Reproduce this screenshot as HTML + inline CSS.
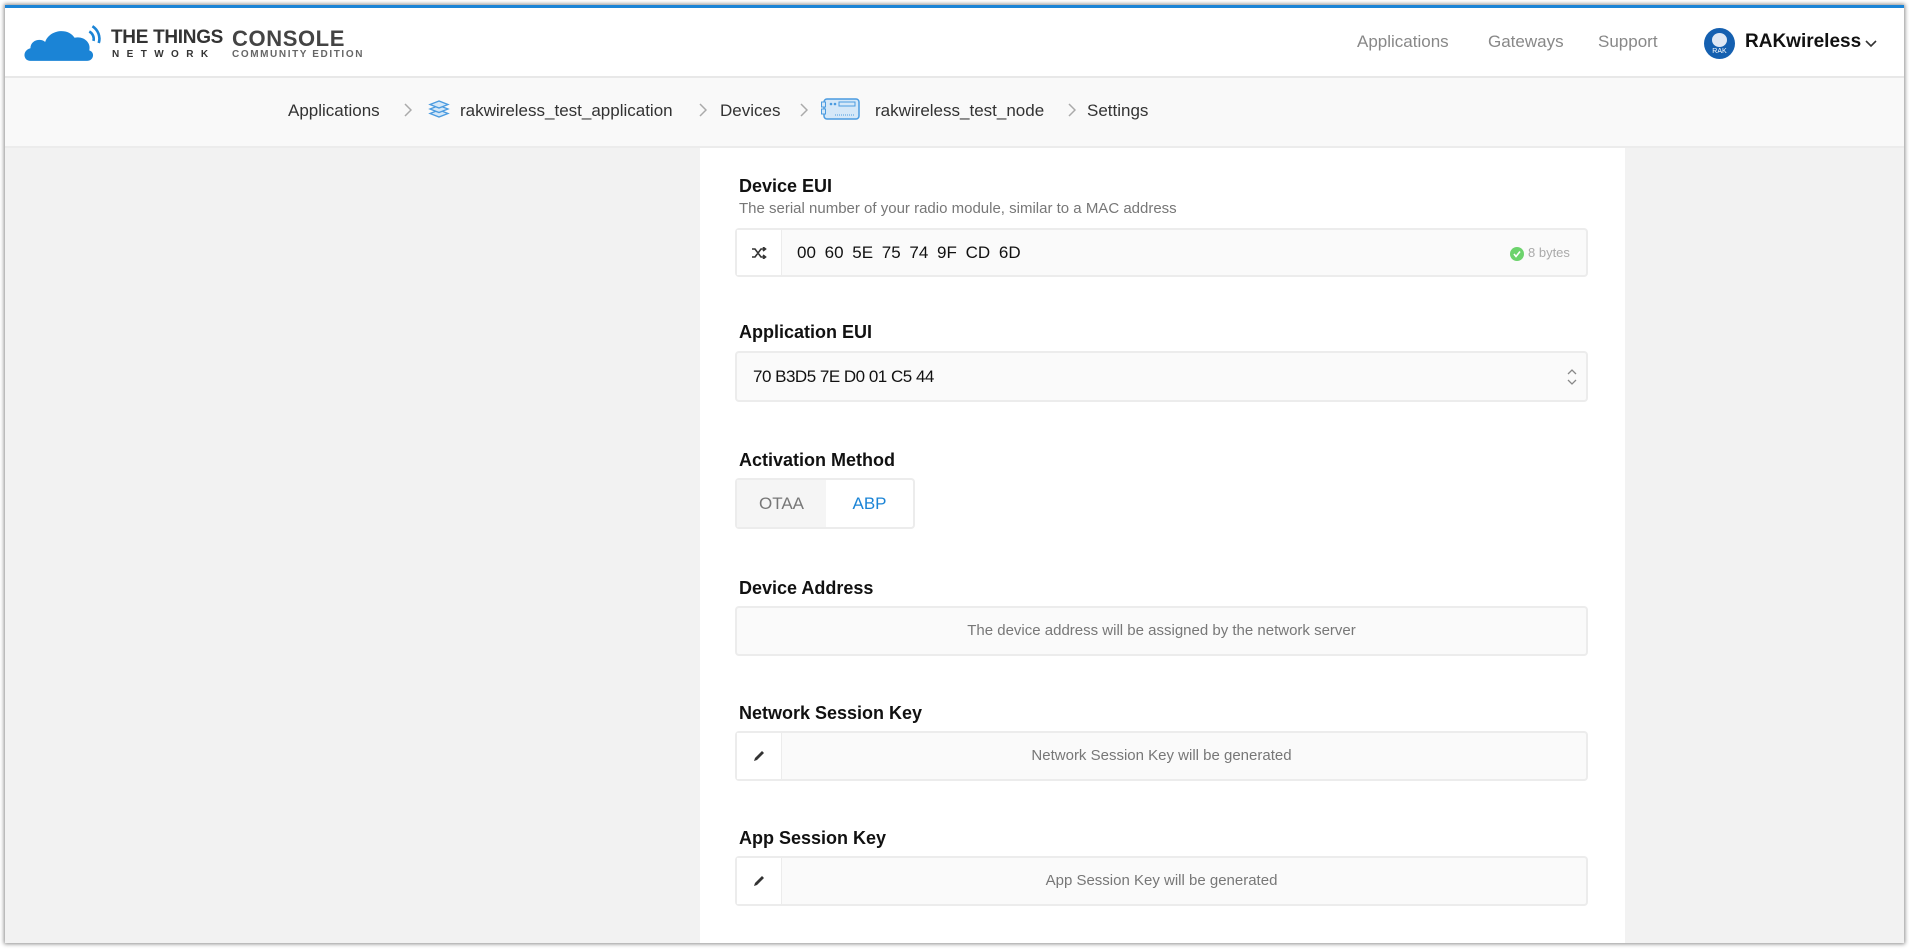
<!DOCTYPE html>
<html><head><meta charset="utf-8"><style>
*{margin:0;padding:0;box-sizing:border-box}
body{width:1909px;height:951px;background:#fff;font-family:"Liberation Sans",sans-serif;position:relative;overflow:hidden}
#frame{position:absolute;left:5px;top:5px;width:1899px;height:938px;background:#f2f2f2;box-shadow:0 0 4px 1px rgba(0,0,0,.45);overflow:hidden}
#top{position:absolute;left:0;top:0;width:100%;height:3px;background:#1b84d6}
#hdr{position:absolute;left:0;top:3px;width:100%;height:70px;background:#fff;border-bottom:2px solid #e8e8e8}
#bc{position:absolute;left:0;top:73px;width:100%;height:70px;background:#f9f9f9;border-bottom:2px solid #ececec}
.a{position:absolute;white-space:nowrap}
.nav{font-size:17px;color:#888;top:24px}
.bct{font-size:17px;color:#333;top:23px}
.chev{top:25px}
#panel{position:absolute;left:695px;top:143px;width:925px;height:800px;background:#fff}
.lbl{position:absolute;left:39px;font-weight:bold;font-size:18px;color:#111}
.box{position:absolute;left:35px;width:853px;background:#fafafa;border:2px solid #ececec;border-radius:4px}
.ic{position:absolute;left:0;top:0;width:45px;height:100%;border-right:1px solid #ececec;background:#fff;display:flex;align-items:center;justify-content:center}
.ph{position:absolute;left:0;right:0;text-align:center;font-size:15px;color:#777}
</style></head><body>
<div id="frame">
<div id="top"></div>
<div id="hdr">
 <svg class="a" style="left:17px;top:12px" width="82" height="44" viewBox="0 0 78 40">
  <path d="M8 38 C1 38 0 28 8 26 C8 18 18 16 22 20 C26 8 44 6 50 16 C58 14 66 20 64 28 C70 30 68 38 62 38 Z" fill="#1b84d6"/>
  <path d="M64 10 a8 8 0 0 1 4 9" stroke="#1b84d6" stroke-width="2.5" fill="none"/>
  <path d="M67 5 a14 14 0 0 1 6 16" stroke="#1b84d6" stroke-width="2.5" fill="none"/>
 </svg>
 <div class="a" style="left:106px;top:19px;font-weight:bold;font-size:19px;color:#333;letter-spacing:-0.3px">THE THINGS</div>
 <div class="a" style="left:107px;top:41px;font-weight:bold;font-size:10px;color:#333;letter-spacing:7.4px">NETWORK</div>
 <div class="a" style="left:227px;top:18px;font-weight:bold;font-size:22px;color:#444;letter-spacing:0.6px">CONSOLE</div>
 <div class="a" style="left:227px;top:41px;font-weight:bold;font-size:10px;color:#666;letter-spacing:1.6px">COMMUNITY EDITION</div>
 <div class="a nav" style="left:1352px">Applications</div>
 <div class="a nav" style="left:1483px">Gateways</div>
 <div class="a nav" style="left:1593px">Support</div>
 <div class="a" style="left:1699px;top:20px;width:31px;height:31px;border-radius:50%;background:#1560b0"><div style="position:absolute;left:8px;top:5px;width:15px;height:14px;border-radius:50%;background:#dfe8f4"></div><div style="position:absolute;left:0;width:31px;top:20px;font-size:7px;color:#fff;text-align:center">RAK</div></div>
 <div class="a" style="left:1740px;top:23px;font-weight:bold;font-size:19px;color:#111">RAKwireless</div>
 <svg class="a" style="left:1860px;top:32px" width="12" height="8"><path d="M1 1 L6 6 L11 1" stroke="#333" stroke-width="1.6" fill="none"/></svg>
</div>
<div id="bc">
 <div class="a bct" style="left:283px">Applications</div>
 <svg class="a chev" style="left:399px" width="8" height="14"><path d="M1 1 L7 7 L1 13" stroke="#aaa" stroke-width="1.5" fill="none"/></svg>
 <svg class="a" style="left:423px;top:20px" width="22" height="22" viewBox="0 0 22 22"><g fill="#d5e8f8" stroke="#4a9be0" stroke-width="1.3"><path d="M11 12 L2 15.5 L11 19 L20 15.5 Z"/><path d="M11 7.5 L2 11 L11 14.5 L20 11 Z"/><path d="M11 3 L2 6.5 L11 10 L20 6.5 Z"/></g></svg>
 <div class="a bct" style="left:455px">rakwireless_test_application</div>
 <svg class="a chev" style="left:694px" width="8" height="14"><path d="M1 1 L7 7 L1 13" stroke="#aaa" stroke-width="1.5" fill="none"/></svg>
 <div class="a bct" style="left:715px">Devices</div>
 <svg class="a chev" style="left:795px" width="8" height="14"><path d="M1 1 L7 7 L1 13" stroke="#aaa" stroke-width="1.5" fill="none"/></svg>
 <svg class="a" style="left:816px;top:19px" width="40" height="24" viewBox="0 0 40 24"><rect x="3" y="2" width="35" height="20" rx="3" fill="#d5e8f8" stroke="#4a9be0" stroke-width="1.5"/><rect x="0.5" y="5" width="4" height="5" fill="#d5e8f8" stroke="#4a9be0"/><rect x="0.5" y="12" width="4" height="5" fill="#d5e8f8" stroke="#4a9be0"/><circle cx="10" cy="7" r="1.3" fill="#4a9be0"/><circle cx="14" cy="7" r="1.3" fill="#4a9be0"/><rect x="18" y="5" width="16" height="4" fill="none" stroke="#4a9be0"/><path d="M14 18 H34" stroke="#4a9be0" stroke-dasharray="1 1"/></svg>
 <div class="a bct" style="left:870px">rakwireless_test_node</div>
 <svg class="a chev" style="left:1063px" width="8" height="14"><path d="M1 1 L7 7 L1 13" stroke="#aaa" stroke-width="1.5" fill="none"/></svg>
 <div class="a bct" style="left:1082px">Settings</div>
</div>
<div id="panel">
 <div class="lbl" style="top:28px">Device EUI</div>
 <div class="a" style="left:39px;top:52px;font-size:15px;color:#777">The serial number of your radio module, similar to a MAC address</div>
 <div class="box" style="top:80px;height:49px">
  <div class="ic"><svg width="16" height="12" viewBox="0 0 16 12"><path d="M1 2 H4 L10 10 H14 M1 10 H4 L10 2 H14 M12 0 L14.5 2 L12 4 M12 8 L14.5 10 L12 12" stroke="#333" stroke-width="1.6" fill="none"/></svg></div>
  <div class="a" style="left:60px;top:13px;font-size:17px;color:#111;word-spacing:4px">00 60 5E 75 74 9F CD 6D</div>
  <div class="a" style="left:773px;top:17px;width:14px;height:14px;border-radius:50%;background:#6cd36c"><svg width="14" height="14"><path d="M4 7 L6 9.5 L10 4.5" stroke="#fff" stroke-width="1.6" fill="none"/></svg></div>
  <div class="a" style="left:791px;top:15px;font-size:13px;color:#aaa">8 bytes</div>
 </div>
 <div class="lbl" style="top:174px">Application EUI</div>
 <div class="box" style="top:203px;height:51px">
  <div class="a" style="left:16px;top:14px;font-size:17px;color:#111;letter-spacing:-0.5px">70 B3D5 7E D0 01 C5 44</div>
  <svg class="a" style="left:829px;top:15px" width="12" height="18"><path d="M2 6 L6 2 L10 6 M2 12 L6 16 L10 12" stroke="#888" stroke-width="1.3" fill="none"/></svg>
 </div>
 <div class="lbl" style="top:302px">Activation Method</div>
 <div class="box" style="top:330px;width:180px;height:51px;background:#fff">
  <div class="a" style="left:0;top:0;width:89px;height:47px;background:#f5f5f5;text-align:center;line-height:47px;font-size:17px;color:#777">OTAA</div>
  <div class="a" style="left:89px;top:0;width:87px;height:47px;text-align:center;line-height:47px;font-size:17px;color:#1b84d6">ABP</div>
 </div>
 <div class="lbl" style="top:430px">Device Address</div>
 <div class="box" style="top:458px;height:50px"><div class="ph" style="top:14px">The device address will be assigned by the network server</div></div>
 <div class="lbl" style="top:555px">Network Session Key</div>
 <div class="box" style="top:583px;height:50px">
  <div class="ic"><svg width="14" height="14" viewBox="0 0 14 14"><path d="M2 12 L3 9 L10 2 L12 4 L5 11 Z" fill="#333"/></svg></div>
  <div class="ph" style="top:14px">Network Session Key will be generated</div>
 </div>
 <div class="lbl" style="top:680px">App Session Key</div>
 <div class="box" style="top:708px;height:50px">
  <div class="ic"><svg width="14" height="14" viewBox="0 0 14 14"><path d="M2 12 L3 9 L10 2 L12 4 L5 11 Z" fill="#333"/></svg></div>
  <div class="ph" style="top:14px">App Session Key will be generated</div>
 </div>
</div>
</div>
</body></html>
